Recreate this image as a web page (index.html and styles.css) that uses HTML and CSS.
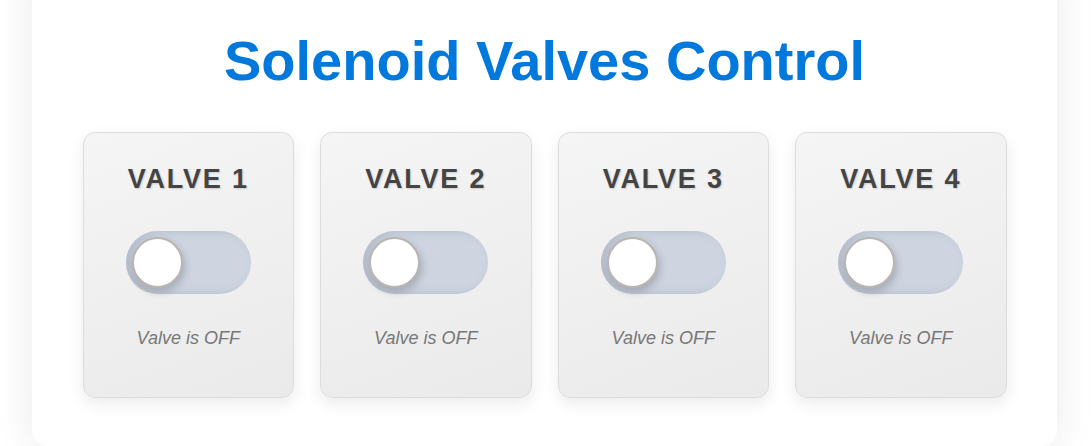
FILE: index.html
```html
<!DOCTYPE html>
<html lang="en">
<head>
<meta charset="utf-8">
<title>Solenoid Valves Control</title>
<link rel="stylesheet" href="styles.css">
</head>
<body>
<main class="container">
  <h1 class="title">Solenoid Valves Control</h1>
  <div class="valves">
    <section class="card">
      <h2 class="card-title">VALVE 1</h2>
      <label class="switch"><input type="checkbox"><span class="track"><span class="knob"></span></span></label>
      <p class="status">Valve is OFF</p>
    </section>
    <section class="card">
      <h2 class="card-title">VALVE 2</h2>
      <label class="switch"><input type="checkbox"><span class="track"><span class="knob"></span></span></label>
      <p class="status">Valve is OFF</p>
    </section>
    <section class="card">
      <h2 class="card-title">VALVE 3</h2>
      <label class="switch"><input type="checkbox"><span class="track"><span class="knob"></span></span></label>
      <p class="status">Valve is OFF</p>
    </section>
    <section class="card">
      <h2 class="card-title">VALVE 4</h2>
      <label class="switch"><input type="checkbox"><span class="track"><span class="knob"></span></span></label>
      <p class="status">Valve is OFF</p>
    </section>
  </div>
</main>
</body>
</html>
```
FILE: styles.css
```css
html, body {
  margin: 0;
  padding: 0;
}
body {
  background: #ffffff;
  font-family: "Liberation Sans", Arial, sans-serif;
  height: 446px;
  overflow: hidden;
}
.container {
  box-sizing: border-box;
  width: 1025px;
  margin: -40px 0 0 32px;
  height: 486px;
  background: #ffffff;
  border-radius: 16px;
  box-shadow: 0 0 40px rgba(0, 0, 0, 0.09);
  padding: 68px 50px 0;
}
.title {
  margin: 0;
  text-align: center;
  color: #0078dc;
  font-size: 56px;
  font-weight: bold;
  line-height: 66px;
}
.valves {
  display: flex;
  justify-content: center;
  gap: 26px;
  margin-top: 38px;
}
.card {
  box-sizing: border-box;
  width: 211.5px;
  height: 266px;
  border: 1px solid #dcdcdc;
  border-radius: 12px;
  background: linear-gradient(160deg, #f5f5f5, #eaeaea);
  box-shadow: 0 6px 16px rgba(0, 0, 0, 0.08);
  display: flex;
  flex-direction: column;
  align-items: center;
  padding-top: 31px;
}
.card-title {
  margin: 0;
  font-size: 27px;
  line-height: 30px;
  font-weight: bold;
  color: #444444;
  letter-spacing: 1.8px;
  text-shadow: 1px 1px 2px rgba(0, 0, 0, 0.15);
}
.switch {
  display: block;
  margin-top: 37px;
  width: 125px;
  height: 63px;
}
.switch input {
  display: none;
}
.track {
  display: block;
  position: relative;
  width: 125px;
  height: 63px;
  border-radius: 32px;
  background: #ced5e1;
  box-shadow: inset 6px 0 10px rgba(100, 110, 130, 0.25);
}
.knob {
  position: absolute;
  left: 6px;
  top: 6px;
  box-sizing: border-box;
  width: 51px;
  height: 51px;
  border-radius: 50%;
  background: #ffffff;
  border: 2px solid #b9b6b2;
  box-shadow: 2px 4px 8px rgba(0, 0, 0, 0.2);
}
.status {
  margin: 33px 0 0;
  font-size: 18px;
  line-height: 22px;
  font-style: italic;
  color: #777777;
}
```
